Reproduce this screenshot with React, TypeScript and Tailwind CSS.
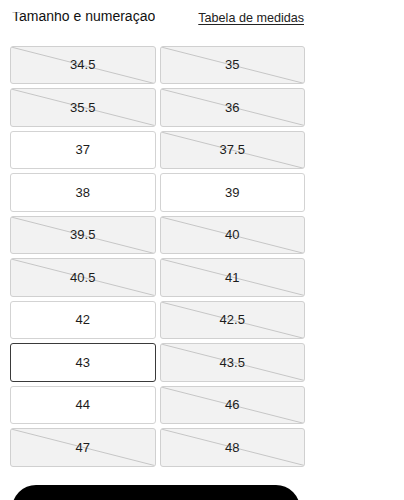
const sizes: { label: string; available: boolean }[] = [
  { label: "34.5", available: false },
  { label: "35", available: false },
  { label: "35.5", available: false },
  { label: "36", available: false },
  { label: "37", available: true },
  { label: "37.5", available: false },
  { label: "38", available: true },
  { label: "39", available: true },
  { label: "39.5", available: false },
  { label: "40", available: false },
  { label: "40.5", available: false },
  { label: "41", available: false },
  { label: "42", available: true },
  { label: "42.5", available: false },
  { label: "43", available: true },
  { label: "43.5", available: false },
  { label: "44", available: true },
  { label: "46", available: false },
  { label: "47", available: false },
  { label: "48", available: false },
];

const SELECTED = "43";

function SizeCell({ label, available }: { label: string; available: boolean }) {
  const selected = label === SELECTED;
  return (
    <button
      type="button"
      className={
        "relative h-[38.5px] rounded-[3px] border flex items-center justify-center overflow-hidden " +
        (available
          ? selected
            ? "bg-white border-[#3a3a3a]"
            : "bg-white border-[#d3d3d3]"
          : "bg-[#f2f2f2] border-[#d0d0d0]")
      }
    >
      {!available && (
        // strike-through for sold out sizes
        <svg className="absolute inset-0 w-full h-full" preserveAspectRatio="none" viewBox="0 0 100 100">
          <line x1="0" y1="0" x2="100" y2="100" stroke="#c6c6c6" strokeWidth="1" vectorEffect="non-scaling-stroke" />
        </svg>
      )}
      <span className="relative text-[13px] leading-none text-[#1c1c1c]">{label}</span>
    </button>
  );
}

export default function App() {
  return (
    <div
      className="w-[404px] h-[500px] overflow-hidden bg-white"
      style={{ fontFamily: '"Liberation Sans", Arial, sans-serif' }}
    >
      <div className="flex items-start h-[45.5px] w-[304px]">
        <div className="mt-[12px] ml-[12px] h-[13px] overflow-hidden">
          <p className="-mt-[3px] text-[14px] leading-[14px] text-[#111] whitespace-nowrap">
            Tamanho e numeração
          </p>
        </div>
        <a className="ml-auto mt-[11px] text-[12.6px] leading-[15px] text-[#222] underline underline-offset-[2px] whitespace-nowrap">
          Tabela de medidas
        </a>
      </div>

      <div className="ml-[10px] w-[295px] grid grid-cols-2 gap-[4px]">
        {sizes.map((s) => (
          <SizeCell key={s.label} label={s.label} available={s.available} />
        ))}
      </div>

      <button type="button" className="mt-[18px] ml-[12px] w-[288px] h-[48px] rounded-full bg-black" />
    </div>
  );
}
